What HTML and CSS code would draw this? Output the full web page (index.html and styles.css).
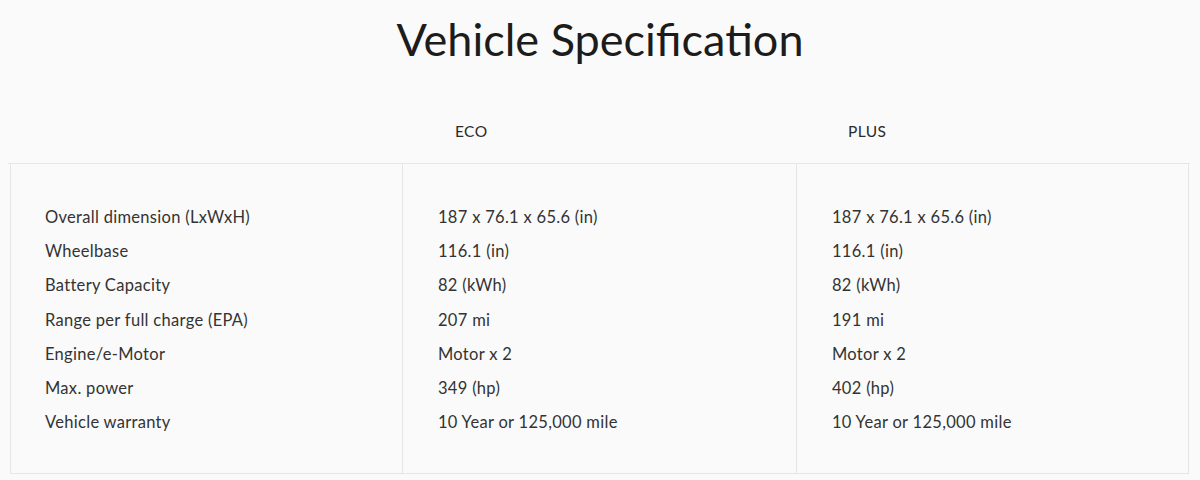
FILE: index.html
```html
<!DOCTYPE html>
<html lang="en">
<head>
<meta charset="utf-8">
<title>Vehicle Specification</title>
<link rel="stylesheet" href="styles.css">
</head>
<body>
<main class="spec">
  <h1 class="spec-title">Vehicle Specification</h1>
  <div class="spec-head">
    <div class="head-cell"></div>
    <div class="head-cell">ECO</div>
    <div class="head-cell">PLUS</div>
  </div>
  <div class="spec-table">
    <ul class="spec-col spec-col-label">
      <li>Overall dimension (LxWxH)</li>
      <li>Wheelbase</li>
      <li>Battery Capacity</li>
      <li>Range per full charge (EPA)</li>
      <li>Engine/e-Motor</li>
      <li>Max. power</li>
      <li>Vehicle warranty</li>
    </ul>
    <ul class="spec-col">
      <li>187 x 76.1 x 65.6 (in)</li>
      <li>116.1 (in)</li>
      <li>82 (kWh)</li>
      <li>207 mi</li>
      <li>Motor x 2</li>
      <li>349 (hp)</li>
      <li>10 Year or 125,000 mile</li>
    </ul>
    <ul class="spec-col">
      <li>187 x 76.1 x 65.6 (in)</li>
      <li>116.1 (in)</li>
      <li>82 (kWh)</li>
      <li>191 mi</li>
      <li>Motor x 2</li>
      <li>402 (hp)</li>
      <li>10 Year or 125,000 mile</li>
    </ul>
  </div>
</main>
</body>
</html>
```
FILE: styles.css
```css
html, body {
  margin: 0;
  padding: 0;
  background: #fafafa;
}
body {
  font-family: "Lato", "Open Sans", sans-serif;
  color: #333333;
}
.spec {
  padding: 0 10px 0 10px;
}
.spec-title {
  margin: 0;
  padding-top: 12px;
  height: 93px;
  text-align: center;
  font-size: 45px;
  font-weight: 400;
  color: #1c1c1c;
  line-height: 54px;
}
.spec-head {
  display: grid;
  grid-template-columns: 392px 394px 1fr;
  height: 58px;
  margin-left: -2px;
  border-bottom: 1px solid #e6e6e6;
}
.head-cell {
  padding-left: 55px;
  padding-top: 17px;
  font-size: 15.5px;
  letter-spacing: 0.4px;
  line-height: 18px;
  color: #2b2b2b;
}
.head-cell:last-child {
  padding-left: 54px;
}
.spec-table {
  display: grid;
  grid-template-columns: 391px 394px 1fr;
  border: 1px solid #e6e6e6;
  border-top: none;
  width: 1179px;
  box-sizing: border-box;
}
.spec-col {
  list-style: none;
  margin: 0;
  padding: 36px 0 34px 35px;
  font-size: 16.5px;
  letter-spacing: 0.3px;
  line-height: 34.2px;
}
.spec-col-label {
  padding-left: 34px;
}
.spec-col + .spec-col {
  border-left: 1px solid #e6e6e6;
}
.spec-col li {
  margin: 0;
}
```
